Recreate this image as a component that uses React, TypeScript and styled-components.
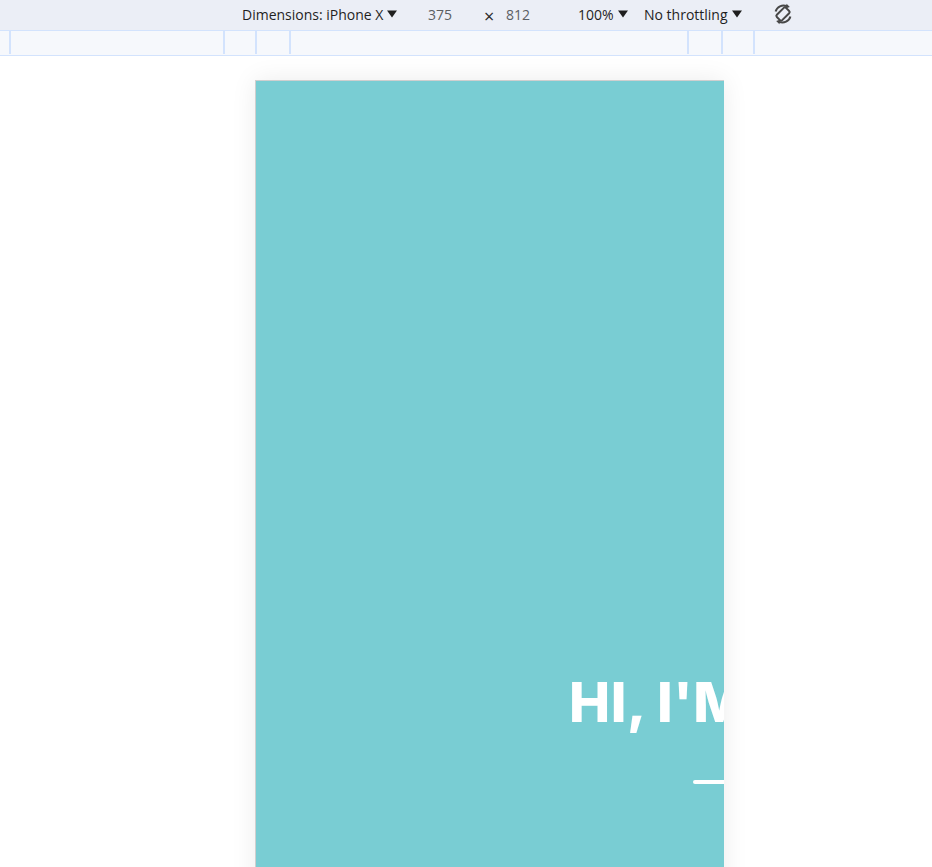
import React from "react";
import styled, { createGlobalStyle } from "styled-components";

const Global = createGlobalStyle`
  html, body { margin: 0; padding: 0; background: #ffffff; overflow: hidden; }
  body { font-family: "Open Sans", "Noto Sans", sans-serif; }
`;

const Page = styled.div`
  width: 932px;
  height: 867px;
  display: flex;
  flex-direction: column;
  overflow: hidden;
`;

const Toolbar = styled.div`
  height: 28px;
  flex: none;
  background: #ebeef6;
  border-bottom: 1px solid #d3e3fd;
  display: flex;
  align-items: center;
  padding: 0 0 2px 242px;
  font-size: 14px;
  color: #1f1f1f;
  box-sizing: content-box;
`;

const Item = styled.div<{ $w: number; $muted?: boolean }>`
  width: ${(p) => p.$w}px;
  flex: none;
  display: flex;
  align-items: center;
  gap: 4px;
  white-space: nowrap;
  color: ${(p) => (p.$muted ? "#5b5e63" : "#1f1f1f")};
`;

const Times = styled.span`
  font-size: 18px;
  line-height: 14px;
  color: #2a2a2a;
  padding-top: 3px;
`;

const Caret = () => (
  <svg width="10" height="8" viewBox="0 0 10 8" style={{ display: "block" }}>
    <path d="M0 0.5 H10 L5 7.5 Z" fill="#1f1f1f" />
  </svg>
);

const RotateIcon = () => (
  <svg width="24" height="24" viewBox="0 0 24 24" style={{ display: "block" }}>
    <g transform="rotate(45 12 12)" fill="none" stroke="#474747" strokeWidth="2">
      <rect x="8.2" y="5.5" width="7.6" height="13" rx="1.6" />
    </g>
    <path d="M4.6 9.6 A8.2 8.2 0 0 1 15.8 4.2" fill="none" stroke="#474747" strokeWidth="2" />
    <path d="M15.6 1.8 L18.8 5.0 L14.6 6.4 Z" fill="#474747" />
    <path d="M19.4 14.4 A8.2 8.2 0 0 1 8.2 19.8" fill="none" stroke="#474747" strokeWidth="2" />
    <path d="M8.4 22.2 L5.2 19.0 L9.4 17.6 Z" fill="#474747" />
  </svg>
);

const Ruler = styled.div`
  height: 24px;
  flex: none;
  background: #f6f8fc;
  border-bottom: 1px solid #d3e3fd;
  position: relative;
`;

const Tick = styled.div`
  position: absolute;
  top: 0;
  bottom: 1px;
  width: 2px;
  background: #d3e3fd;
`;

const Stage = styled.div`
  flex: 1;
  background: #ffffff;
  padding: 24px 0 0 255px;
`;

const Device = styled.div`
  width: 468px;
  height: 1015px;
  background: #79cdd3;
  border-top: 1px solid #cfcfcf;
  border-left: 1px solid #cfcfcf;
  box-shadow: 0 0 24px rgba(0, 0, 0, 0.08);
  overflow: hidden;
  display: flex;
  flex-direction: column;
`;

const Hero = styled.div`
  padding: 588px 0 0 313px;
  display: flex;
  flex-direction: column;
`;

const Title = styled.h1`
  margin: 0;
  font-family: "Inter", "Open Sans", sans-serif;
  font-weight: 800;
  font-size: 55px;
  line-height: 66px;
  color: #ffffff;
  white-space: nowrap;
  letter-spacing: 0.5px;
`;

const Underline = styled.div`
  margin: 45px 0 0 124px;
  width: 60px;
  height: 4px;
  border-radius: 2px;
  background: #ffffff;
`;

const ticks = [10, 224, 256, 290, 688, 722, 754];

export default function App() {
  return (
    <Page>
      <Global />
      <Toolbar>
        <Item $w={186}>
          <span>Dimensions: iPhone X</span>
          <Caret />
        </Item>
        <Item $w={56} $muted>375</Item>
        <Item $w={22}>
          <Times>×</Times>
        </Item>
        <Item $w={72} $muted>812</Item>
        <Item $w={66}>
          <span>100%</span>
          <Caret />
        </Item>
        <Item $w={127}>
          <span>No throttling</span>
          <Caret />
        </Item>
        <Item $w={30}>
          <RotateIcon />
        </Item>
      </Toolbar>
      <Ruler>
        {ticks.map((x) => (
          <Tick key={x} style={{ left: x - 1 }} />
        ))}
      </Ruler>
      <Stage>
        <Device>
          <Hero>
            <Title>HI, I'M</Title>
            <Underline />
          </Hero>
        </Device>
      </Stage>
    </Page>
  );
}
